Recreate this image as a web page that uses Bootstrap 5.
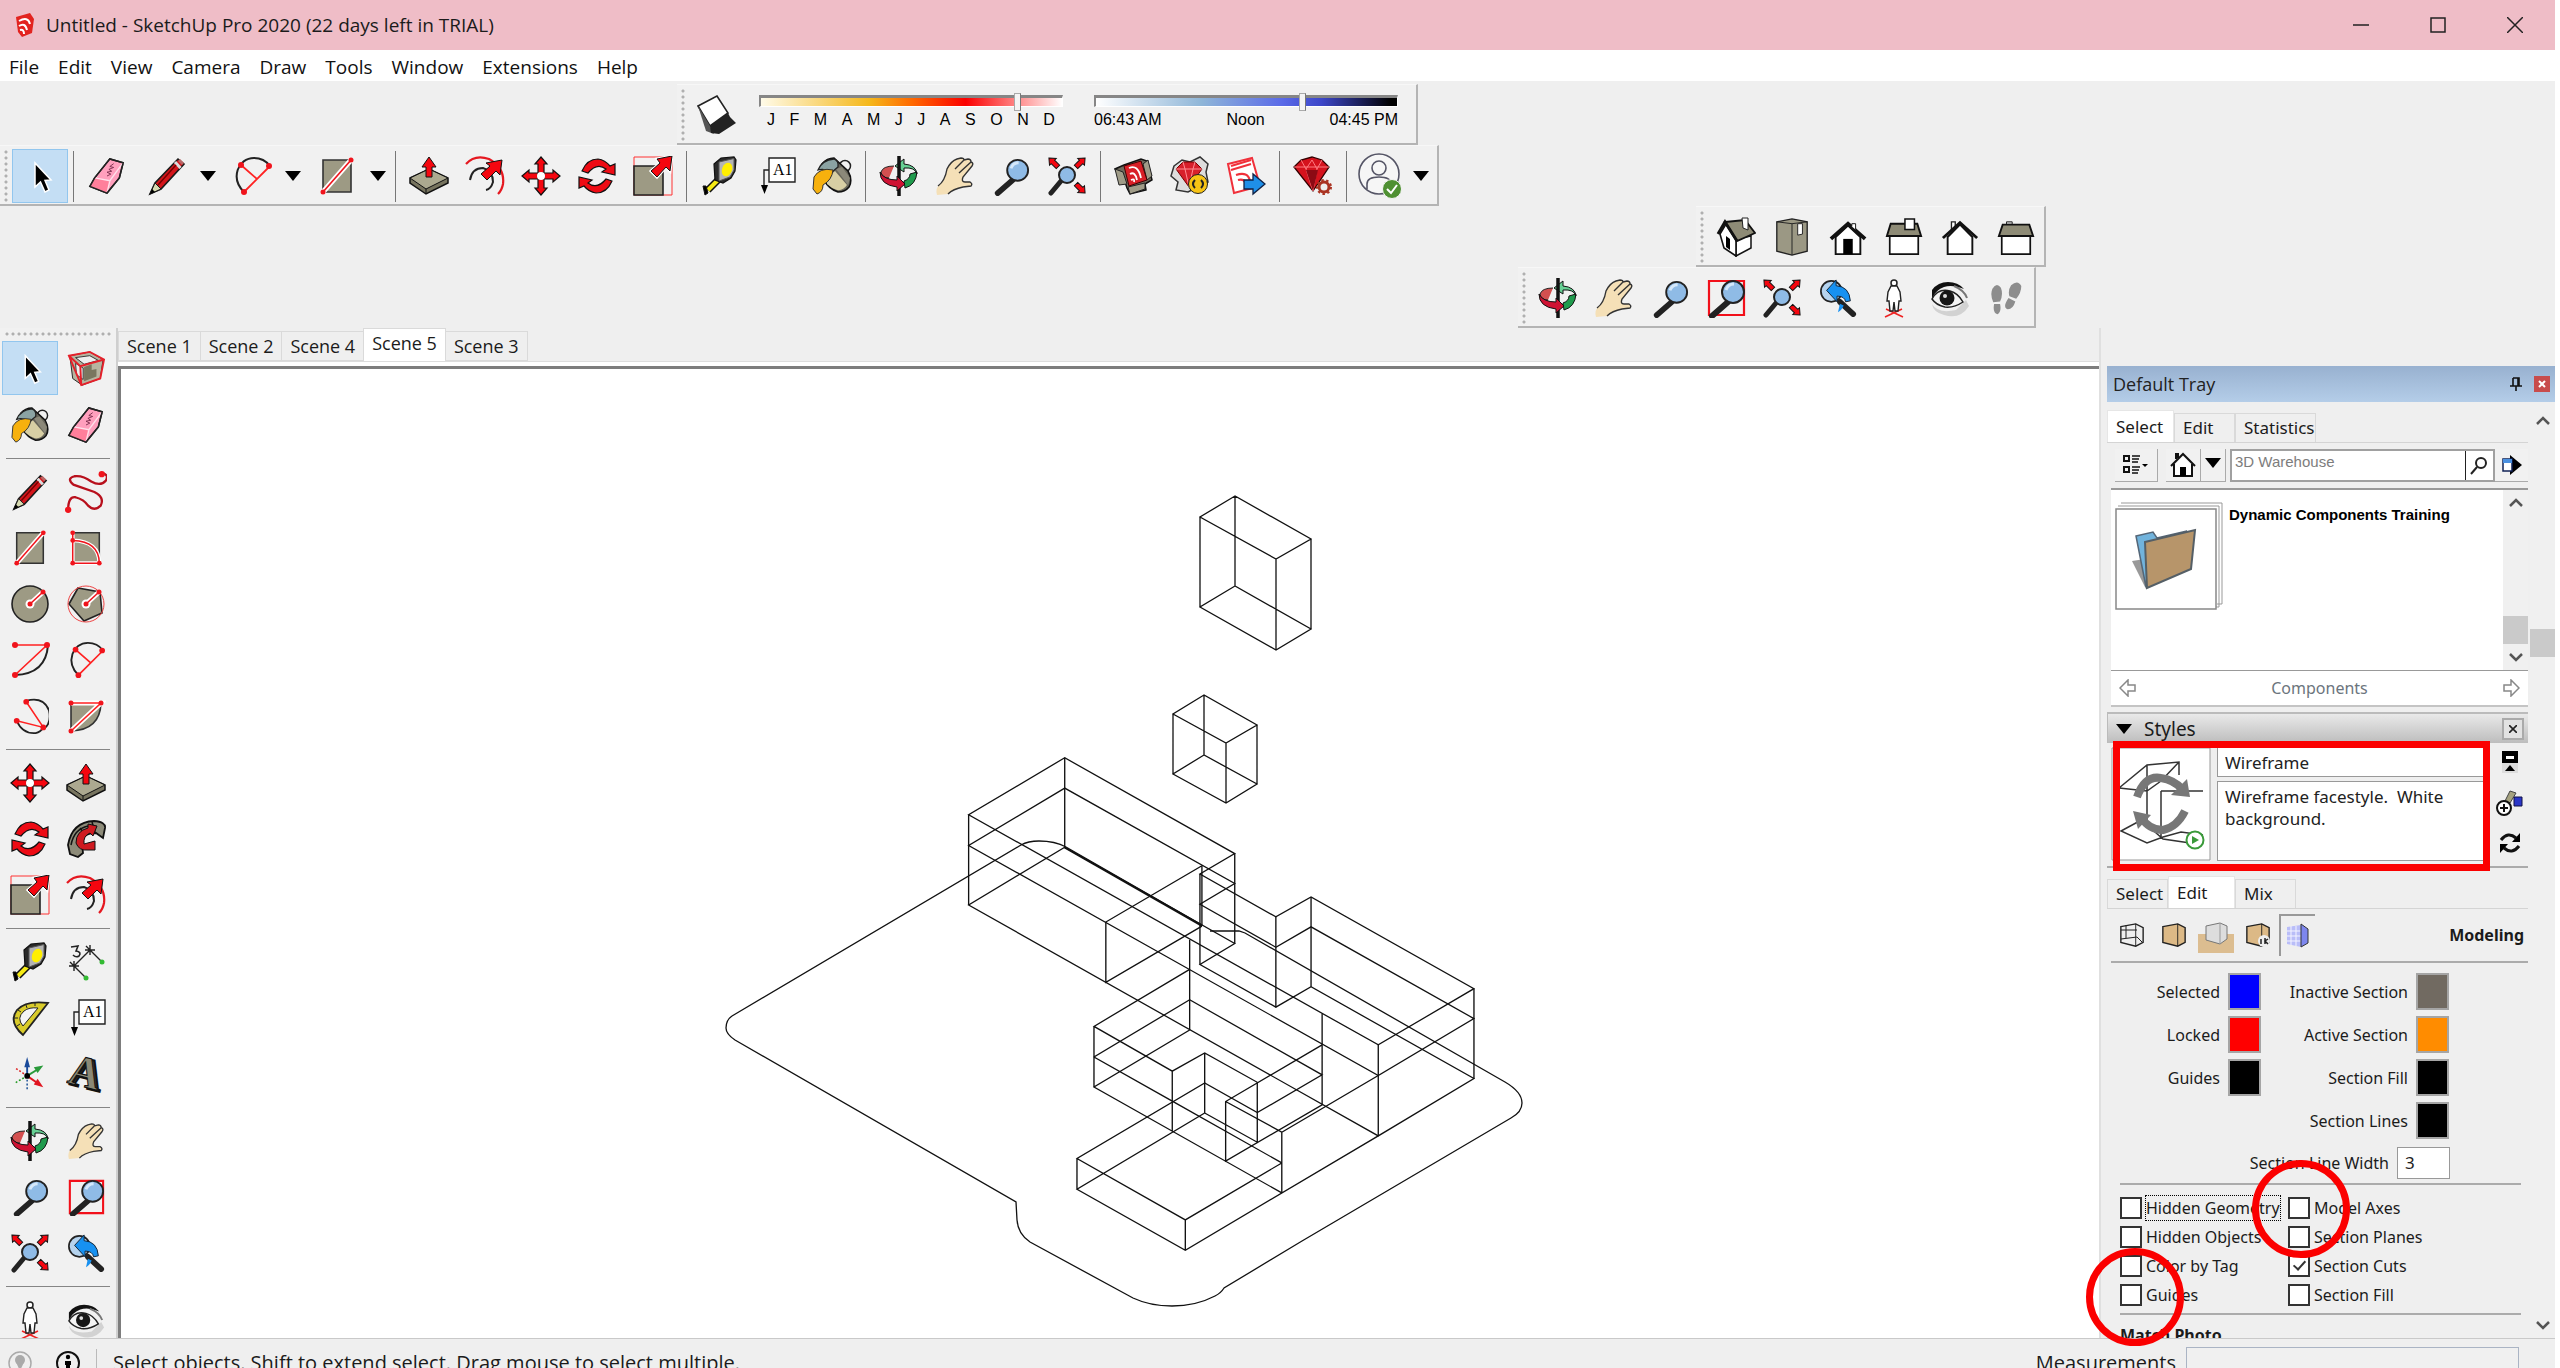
<!DOCTYPE html>
<html lang="en">
<head>
<meta charset="utf-8">
<meta name="viewport" content="width=device-width, initial-scale=1">
<title>Untitled - SketchUp Pro 2020</title>
<link href="https://cdn.jsdelivr.net/npm/bootstrap@5.3.0/dist/css/bootstrap.min.css" rel="stylesheet">
<style>
:root{--face:#efefef;--bar:#f1f1f1;--edge:#b4b4b4;--ui:"Open Sans","Noto Sans",sans-serif;--tray:"Noto Sans","Open Sans",sans-serif;--red:#fb0000}
body{font-family:var(--ui);font-size:18px;line-height:24px;color:#1b1b1b;background:#fff;height:100vh;overflow:hidden;padding-right:5px}
button{font:inherit;color:inherit;background:none;border:0;padding:0}
svg{display:block;flex:none}
.titlebar{height:50px;background:#efbdc7;font-size:19px;padding-right:2px}
.winbtn{width:77px;height:50px;display:flex;align-items:center;justify-content:center}
.menubar{height:31px;background:#fff;font-size:19px;padding:2px 0 0 9px;gap:19px}
.menubar a{color:#111;text-decoration:none}
.dock{background:var(--face);height:247px;padding-top:3px}
.toolstrip{height:61px;padding-top:2px;background:var(--bar);border-right:2px solid var(--edge);border-bottom:2px solid var(--edge);border-top:1px solid #f7f7f7;width:max-content}
.at-shadow{margin-left:677px;padding-right:18px}.at-views{margin-left:1696px}.at-camera{margin-left:1518px}
.grip{width:12px;height:54px;flex:none;background:radial-gradient(circle,#b0b0b0 1px,transparent 2px) 4px 0/4px 6px repeat-y}
.grip-h{height:13px;background:radial-gradient(circle,#b0b0b0 1px,transparent 2px) 0 4px/6px 4px repeat-x;margin:0 4px}
.tool{width:56px;height:56px;display:flex;align-items:center;justify-content:center;flex:none}
.tool.picked{background:#c4def4;border:1px solid #92c6ee;height:54px}
.sep{width:11px;height:51px;flex:none;background:linear-gradient(#777,#777) center/1px 100% no-repeat}
.drop{width:25px;height:50px;display:flex;align-items:center;justify-content:center}
.drop::after,.tri{content:"";border:8px solid transparent;border-top:10px solid #000;border-bottom:0}
.daysl{width:304px;flex:none;margin-left:6px;padding-bottom:8px;font-family:"Liberation Sans",Arial,sans-serif;font-size:16px;line-height:20px;color:#000}
.daysl + .daysl{margin-left:31px}
.daysl input{appearance:none;width:100%;height:18px;display:block;margin:0;background:transparent}
.daysl input::-webkit-slider-runnable-track{height:12px;border-top:3px solid #868686;border-left:2px solid #868686;border-bottom:1px solid #fff;border-right:1px solid #fff}
.daysl input::-webkit-slider-thumb{appearance:none;width:7px;height:18px;background:#f4f4f4;border:1px solid #aaa;border-right-color:#777;margin-top:-5px}
#month::-webkit-slider-runnable-track{background:linear-gradient(90deg,#fffbe9,#f5b81b 36%,#ff6a00 50%,#fb0000 68%,#f88 85%,#fff)}
#hour::-webkit-slider-runnable-track{background:linear-gradient(90deg,#fff,#8fb6d8 35%,#5a6ae8 62%,#3c46c8 75%,#000 98%)}
.sidebar{width:118px;background:var(--bar);border-right:2px solid #cfcfcf;flex:none;overflow:hidden}
.toolgrid{padding:0 2px}
.rule-h{height:11px;padding:5px 6px}
.rule-h::before{content:"";display:block;height:1px;background:#858585}
.scenes{background:var(--face);height:34px;padding-top:1px;border-bottom:1px solid #ddd}
.scene{border:1px solid #dadada;height:30px;padding:0 8px;line-height:28px;margin-right:-1px;flex:none}
.scene.on{background:#fff;height:33px;padding:0 8px 4px;border-bottom:0}
.canvas3d{background:#fff;border-top:3px solid #7d7d7d;border-left:3px solid #7d7d7d;margin-top:4px;min-height:0}
.trayside{width:456px;flex:none;background:var(--face);font-family:var(--tray);font-size:16px;border-left:2px solid #e0e0e0;padding-left:6px}
.tray-title{height:36px;background:linear-gradient(#98b1d0,#b4cde8);padding:0 5px 0 6px;margin-top:38px;font-family:var(--ui);font-size:18px;color:#222}
.tray-x{width:16px;height:16px;background:#c84c4c;display:flex;align-items:center;justify-content:center}
.minitabs{border-bottom:1px solid #d4d4d4;height:33px;font-size:17px}
.minitab{border:1px solid #d9d9d9;border-bottom:0;height:29px;line-height:28px;padding:0 8px;text-align:left}
.minitab.on{background:#fff;height:32px;border-color:#e6e6e6}
.w60{width:61px}.w67{width:67px}.w81{width:81px}
.sb{width:25px;background:#f0f0f0;flex:none}
.sb i{display:block;background:#cacaca;height:28px}
.toolrow{padding:6px 0 6px 8px}
.flatbtn{height:33px;display:flex;align-items:center;justify-content:center;border-right:1px solid #aaa;border-bottom:1px solid #aaa;background:#f1f1f1}
.search{height:33px;border:2px solid #a0a0a0;background:#fff;width:265px}
.search input{border:0;outline:0;width:234px;height:29px;padding:0 3px 8px;font-family:"Liberation Sans",Arial,sans-serif;font-size:15px;border-right:1px solid #222}
.search input::placeholder{color:#7d7d7d}
.comps{height:183px;background:#fff;border-top:2px solid #999;border-bottom:1px solid #999}
.compname{font:bold 15px/24px "Liberation Sans",Arial,sans-serif;color:#000;padding:13px 0 0 6px}
.compnav{height:36px;border-bottom:2px solid #c4c4c4;margin-bottom:5px}
.stylehead{height:31px;background:linear-gradient(#e9e9e9,#bdbdbd);border-top:2px solid #bbb;border-left:1px solid #bbb;font-size:19px}
.xbtn{width:22px;height:22px;border:2px solid #aaa;background:#e2e2e2;display:flex;align-items:center;justify-content:center}
.styleinfo{height:123px;padding-top:4px;gap:6px}
.fld{border:1px solid #999;background:#fff;width:268px;padding:0 7px;font-size:17px;line-height:22px;color:#222;display:block;resize:none;overflow:hidden;border-radius:0;outline:0}
.namefld{height:30px}.descfld{height:80px;padding-top:4px}
.styletabs{height:41px}
.modelrow{height:52px}
.mi{width:42px;height:42px;display:flex;align-items:center;justify-content:center}
.mi-on{width:36px;border-left:2px solid #999;border-top:2px solid #999}
.colors{padding-top:7px}
.swatch{width:33px;height:37px;border:2px solid #a5a5a5;display:block;flex:none}
.colorrow{height:43px}
.lab1{width:113px;text-align:right}.lab2{width:147px;text-align:right}
.lw{height:41px;padding-right:78px}
.lwfld{width:53px;height:32px}
.chk{appearance:none;width:22px;height:22px;border:2px solid #333;background:#fff;margin:0 4px 0 0;flex:none}
.chk:checked{position:relative}
.chk:checked::after{content:"";position:absolute;left:6px;top:1px;width:7px;height:12px;border:solid #333;border-width:0 2px 2px 0;transform:rotate(42deg)}
.chkline{height:29px}
.chkcol{width:168px}
.dotted{outline:1px dotted #000}
.line{height:2px;background:#ababab}
.inset{margin-left:13px;margin-right:7px}
.outer{padding:14px 0 8px;margin-left:2px}
.outer i{margin-top:203px}
.ring{position:absolute;width:98px;height:98px;border:7px solid var(--red);border-radius:50%;pointer-events:none;z-index:5}
.ring-a{right:371px;bottom:-8px}
.ring-b{right:205px;bottom:80px}
.redbox{position:absolute;left:6px;top:-2px;width:377px;height:130px;border:7px solid var(--red);pointer-events:none;z-index:4}
.statusbar{height:30px;background:var(--face);border-top:1px solid #c9c9c9;overflow:hidden;flex:none;font-size:20px;line-height:28px;padding-top:10px}
.statusbar svg{margin-top:2px}
.meas{width:333px;height:34px;border:1px solid #aab4c4;background:#f0f0f0;margin:-2px 36px 0 10px}
</style>
<script src="https://cdn.jsdelivr.net/npm/bootstrap@5.3.0/dist/js/bootstrap.bundle.min.js"></script>
</head>
<body class="d-flex flex-column">

<svg width="0" height="0" class="position-absolute" aria-hidden="true">
<defs>
<path id="arr" d="M0-9L6-2H3V7H-3V-2H-6Z" fill="#f5060f" stroke="#111" stroke-width="1.2"/>
<g id="lens"><path d="M22 24L6 38" stroke="#222" stroke-width="6" stroke-linecap="round"/><circle cx="27" cy="14" r="11" fill="#8fbbe6" stroke="#222" stroke-width="2"/><path d="M20 12q2-6 8-6" stroke="#d5e8fa" stroke-width="3" fill="none"/></g>
<symbol id="i-select" viewBox="0 0 40 40"><path d="M15 7V31L20.500 26L25 36L29 34L25 24.500L31 24Z" fill="#000" stroke="#fff" stroke-width="1.500"/></symbol>
<symbol id="i-eraser" viewBox="0 0 40 40"><path d="M7 22L23 2L37 6L33 22L20 38L2 31Z" fill="#ff9fbd" stroke="#222" stroke-width="1.600"/><path d="M7 22L23 25L20 38L2 31Z" fill="#ff7f9b"/><path d="M7 22L23 25L37 6M23 25L20 38" stroke="#ffe0ea" stroke-width="1.400" fill="none"/><path d="M27 7l-4 3 4 1-5 2 3 2-5 1 4 2-4 2" stroke="#803050" fill="none"/><path d="M7 22L23 2L37 6L33 22L20 38L2 31Z" fill="none" stroke="#222" stroke-width="1.600"/></symbol>
<symbol id="i-pencil" viewBox="0 0 40 40"><path d="M31 3L37 8L14 33L3 38L8 27Z" fill="#d4151b" stroke="#1a1a1a" stroke-width="1.600"/><path d="M8 27L14 33L3 38Z" fill="#d7dab0" stroke="#1a1a1a"/><path d="M3 38l2-5 3 3z"/><path d="M28 6l5.500 6" stroke="#ddd" stroke-width="3"/><path d="M32 4l4 4" stroke="#b66" stroke-width="3"/><path d="M11 29L29 9" stroke="#700" stroke-width="1.500"/></symbol>
<symbol id="i-arc2" viewBox="0 0 40 40"><path d="M12 36C-2 22 6 2 22 2 30 2 35 6 38 10" fill="none" stroke="#222" stroke-width="2"/><path d="M12 36L38 10M9 9L25 23" stroke="#f22" stroke-width="1.800"/><g fill="#f0141c"><circle cx="12" cy="36" r="3"/><circle cx="37" cy="10" r="3"/><circle cx="9" cy="9" r="3"/></g></symbol>
<symbol id="i-rect" viewBox="0 0 40 40"><path d="M6 4H34V36H6Z" fill="#9d9a84" stroke="#333" stroke-width="1.600"/><path d="M6 36L34 4" stroke="#fff" stroke-width="5"/><path d="M6 36L34 4" stroke="#f0141c" stroke-width="1.600"/><circle cx="6" cy="36" r="2.500" fill="#f0141c"/><circle cx="34" cy="4" r="2.500" fill="#f0141c"/></symbol>
<symbol id="i-push" viewBox="0 0 40 40"><path d="M1 22L20 13L39 22V27L17 38L1 27Z" fill="#77745f" stroke="#111" stroke-width="1.500"/><path d="M1 22L20 13L39 22L17 33Z" fill="#aca990" stroke="#111"/><path d="M17 33v5" stroke="#111"/><path d="M20 1L27 11H23V21H17V11H13Z" fill="#f5060f" stroke="#111"/></symbol>
<symbol id="i-offset" viewBox="0 0 40 40"><path d="M1 8Q10-2 24 3Q40 12 38 28Q37 34 33 38" fill="none" stroke="#e51820" stroke-width="2.200"/><path d="M5 24Q7 12 18 12Q28 15 28 26Q26 33 21 34" fill="none" stroke="#222" stroke-width="2"/><path d="M37 4L35 19L31 15L22 24L16 18L25 10L21 7Z" fill="#f5060f" stroke="#111"/></symbol>
<symbol id="i-move" viewBox="0 0 40 40"><use href="#arr" x="20" y="10"/><use href="#arr" transform="translate(30 20) rotate(90)"/><use href="#arr" transform="translate(20 30) rotate(180)"/><use href="#arr" transform="translate(10 20) rotate(270)"/><circle cx="20" cy="20" r="4" fill="#fff"/></symbol>
<symbol id="i-rotate" viewBox="0 0 40 40"><path id="rot" d="M5 15Q10 3 21 3Q28 4 33 10L38 8V19L25 16L29 13Q20 6 11 17Z" fill="#ee0b14" stroke="#111" stroke-width="1.200"/><use href="#rot" transform="rotate(180 20 20)"/></symbol>
<symbol id="i-scale" viewBox="0 0 40 40"><path d="M1 1H39V39H1Z" fill="none" stroke="#f33"/><path d="M1 10H30V39H1Z" fill="#9d9a84" stroke="#222" stroke-width="1.600"/><path d="M39 0L37 15L33 11L24 21L18 15L27 7L24 3Z" fill="#f5060f" stroke="#fff" stroke-width="3"/><path d="M39 0L37 15L33 11L24 21L18 15L27 7L24 3Z" fill="#f5060f" stroke="#111"/></symbol>
<symbol id="i-tape" viewBox="0 0 40 40"><path d="M21 21L8 34" stroke="#111" stroke-width="7"/><path d="M21 21L8 34" stroke="#f5ea14" stroke-width="4"/><path d="M3 30l3 0 2 7-3 2z" stroke="#111"/><path d="M14 8L21 2L34 1L36 4L35 15L31 22L23 27L15 24Z" fill="#2a2a2a" stroke="#111" stroke-width="1.200"/><path d="M19 6L34 2.500L34 14L30 21L19 25Z" fill="#b4b4b4" stroke="#555"/><ellipse cx="27" cy="13.500" rx="5" ry="7" fill="#ffef00" transform="rotate(22 27 13.500)"/></symbol>
<symbol id="i-text" viewBox="0 0 40 40"><path d="M13 2H39V26H13Z" fill="#fff" stroke="#222" stroke-width="1.400"/><path d="M13 14H8V32" fill="none" stroke="#222" stroke-width="1.400"/><path d="M5 29h7L8.500 38z"/><text x="17" y="19" font-family="Liberation Serif" font-size="16">A1</text></symbol>
<symbol id="i-paint" viewBox="0 0 40 40"><circle cx="33" cy="10" r="5.500" fill="none" stroke="#222" stroke-width="1.500"/><path d="M10 8Q15 2 22 2L36 15Q41 24 37 31Q33 36 26 36Q17 33 12 24Z" fill="#67655a" stroke="#111" stroke-width="1.600"/><path d="M15 22L23 15L35 29Q31 35 25 34Q19 32 15 28Z" fill="#d8cfa4"/><path d="M24 13L30 11L38 22L36 29Z" fill="#8b8879"/><path d="M6 14Q10 4 22 3Q27 5 26 11L20 16Q12 12 6 14Z" fill="#8ba3a3" stroke="#222" stroke-width="1.300"/><path d="M21 14Q8 11 2 21L1 33L5 38Q11 36 11 29Q20 24 21 14Z" fill="#f7b10d" stroke="#333"/></symbol>
<symbol id="i-orbit" viewBox="0 0 40 40"><path d="M15 10Q4 10 2 16Q3 22 10 22" fill="#d35050" stroke="#222"/><path d="M38 16Q37 29 26 32L25 25Q31 23 31 18Z" fill="#209b4d" stroke="#111"/><path d="M38 18Q36 11 25 12V16L16 10L25 3V8Q37 9 38 18Z" fill="#67d094" stroke="#111"/><path d="M20 0V40" stroke="#111" stroke-width="3.500"/><path d="M1 16Q5 24 18 24V20L26 28L18 35V31Q1 29 1 16Z" fill="#cf1233" stroke="#111"/></symbol>
<symbol id="i-hand" viewBox="0 0 40 40"><path d="M2 39Q0 32 5 28Q10 25 12 13Q16 5 22 3L26 2Q29 2 29 4L33 3Q36 3 36 6Q39 7 37 10L28 21Q26 26 30 26L35 26Q38 28 36 30L28 31Q18 33 13 38Z" fill="#f5e0b7"/><path d="M3 30Q10 25 12 13Q16 5 22 3L26 2Q29 2 29 4L33 3Q36 3 36 6Q39 7 37 10L28 21Q26 26 30 26L35 26Q38 28 36 30L28 31Q18 33 13 38M29 4L20 13M36 6L24 17" fill="none" stroke="#333" stroke-width="1.400"/></symbol>
<symbol id="i-zoom" viewBox="0 0 40 40"><use href="#lens"/></symbol>
<symbol id="i-zoomwin" viewBox="0 0 40 40"><path d="M3 3H38V37H3Z" fill="none" stroke="#f2101a" stroke-width="2.200"/><use href="#lens"/></symbol>
<symbol id="i-extents" viewBox="0 0 40 40"><path d="M14 25L4 37" stroke="#222" stroke-width="5" stroke-linecap="round"/><circle cx="20" cy="19" r="8" fill="#8fbbe6" stroke="#222" stroke-width="2"/><use href="#arr" transform="translate(7 7) rotate(-45) scale(.8)"/><use href="#arr" transform="translate(33 7) rotate(45) scale(.8)"/><use href="#arr" transform="translate(33 32) rotate(135) scale(.8)"/></symbol>
<symbol id="i-prev" viewBox="0 0 40 40"><circle cx="13" cy="13" r="11" fill="#b5d3ee" stroke="#222" stroke-width="1.800"/><path d="M22 24L36 37" stroke="#222" stroke-width="6" stroke-linecap="round"/><path d="M8 12L18 1V7Q32 8 33 23L28 24Q27 18 19 18V24Z" fill="#1791f1" stroke="#123"/><path d="M20 35q4-2 6-7l-4-2z" fill="#1791f1"/></symbol>
<symbol id="i-person" viewBox="0 0 40 40"><path d="M11 39L28 31M12 31L29 39" stroke="#e22" stroke-width="1.600"/><circle cx="20" cy="5" r="3" fill="#fff" stroke="#222" stroke-width="1.500"/><path d="M17 8H23L26 14L27 23H25L24 33H21L20 24L19 33H16L15 23H13L14 14Z" fill="#fff" stroke="#222" stroke-width="1.400"/></symbol>
<symbol id="i-eye" viewBox="0 0 40 40"><path d="M2 26Q8 36 26 32L36 22L39 28Q30 42 14 37Q3 34 2 26Z" fill="#c4c4c4" opacity=".7"/><path d="M2 21Q8 10 20 13Q28 15 33 24Q24 30 15 29Q6 27 2 21Z" fill="#f4f4f4" stroke="#222" stroke-width="1.500"/><circle cx="17" cy="20" r="7.500" fill="#161616"/><circle cx="15" cy="18" r="2" fill="#ddd"/><path d="M2 12Q8 4 18 4Q28 4 34 11Q22 6 14 9Q6 12 2 20Z" fill="#111"/><path d="M24 8Q34 12 37 20" stroke="#777" stroke-width="2" fill="none"/></symbol>
<symbol id="i-walk" viewBox="0 0 40 40"><path d="M4 9Q9 1 14 8Q17 16 13 24L5 25Q1 16 4 9ZM6 27H13Q15 36 10 39Q4 38 6 27ZM26 5Q34-2 38 6Q38 14 32 21L24 18Q22 11 26 5ZM23 20L31 24Q28 34 21 33Q16 30 23 20Z" fill="#8d8d8d"/></symbol>
<symbol id="i-component" viewBox="0 0 40 40"><path d="M3 6L24 2L38 10L35 30L16 37L6 30Z" fill="#b7b4a0" stroke="#222"/><path d="M9 8L24 6L33 11L18 15ZM9 14l8 5v12l-7-5z" fill="#eee" stroke="#333"/><path d="M18 18l8-3v6l5-1v8l-13 5z" fill="#79765f"/><path d="M2 6L24 2L39 10L35 30L15 37ZM2 6L14 17L39 10M14 17L15 37" fill="none" stroke="#e5202a" stroke-width="2"/></symbol>
<symbol id="i-freehand" viewBox="0 0 40 40"><path d="M3 37Q3 24 10 25Q18 27 22 33Q28 39 34 33Q38 25 28 20L8 13Q1 7 9 5Q17 4 25 10Q34 15 39 9Q42 3 35 2" fill="none" stroke="#b8101c" stroke-width="2.200"/><circle cx="3" cy="37" r="3" fill="#f0141c"/><circle cx="35" cy="3" r="3" fill="#f0141c"/></symbol>
<symbol id="i-rrect" viewBox="0 0 40 40"><path d="M6 4H34V36H6Z" fill="#9d9a84" stroke="#333" stroke-width="1.600"/><path d="M6 3V36H34Q34 13 6 12" fill="none" stroke="#fff" stroke-width="4"/><path d="M6 3V36H34Q34 13 6 12" fill="none" stroke="#f0141c" stroke-width="1.600"/><g fill="#f0141c"><circle cx="6" cy="4" r="2.500"/><circle cx="6" cy="12" r="2.500"/><circle cx="6" cy="36" r="2.500"/><circle cx="34" cy="36" r="2.500"/></g></symbol>
<symbol id="i-circle" viewBox="0 0 40 40"><circle cx="20" cy="20" r="18" fill="#9d9a84" stroke="#222" stroke-width="1.600"/><path d="M20 20L33 8" stroke="#fff" stroke-width="5"/><circle cx="20" cy="20" r="4.500" fill="#fff"/><path d="M20 20L33 8" stroke="#f0141c" stroke-width="1.600"/><circle cx="20" cy="20" r="2.500" fill="#f0141c"/><circle cx="33" cy="8" r="2.500" fill="#f0141c"/></symbol>
<symbol id="i-polygon" viewBox="0 0 40 40"><path d="M12 4L34 8L36 29L18 37L3 20Z" fill="#9d9a84" stroke="#222" stroke-width="1.600"/><circle cx="20" cy="20" r="18" fill="none" stroke="#e44"/><path d="M20 20L33 8" stroke="#fff" stroke-width="5"/><circle cx="20" cy="20" r="4.500" fill="#fff"/><path d="M20 20L33 8" stroke="#f0141c" stroke-width="1.600"/><circle cx="20" cy="20" r="2.500" fill="#f0141c"/><circle cx="33" cy="8" r="2.500" fill="#f0141c"/></symbol>
<symbol id="i-arc" viewBox="0 0 40 40"><path d="M5 35Q36 34 38 5" fill="none" stroke="#222" stroke-width="2"/><path d="M5 5H37L5 35" fill="none" stroke="#f22" stroke-width="1.600"/><g fill="#f0141c"><circle cx="5" cy="5" r="3"/><circle cx="37" cy="5" r="3"/><circle cx="5" cy="35" r="3"/></g></symbol>
<symbol id="i-arc3" viewBox="0 0 40 40"><path d="M16 4Q34-1 40 14Q43 28 34 34M6 25Q12 39 26 38Q31 37 34 32" fill="none" stroke="#222" stroke-width="2"/><path d="M16 5L34 32L6 25" fill="none" stroke="#f22" stroke-width="1.600"/><g fill="#f0141c"><circle cx="16" cy="5" r="3"/><circle cx="34" cy="32" r="3"/><circle cx="6" cy="25" r="3"/></g></symbol>
<symbol id="i-pie" viewBox="0 0 40 40"><path d="M5 7H35Q34 34 5 35Z" fill="#9d9a84" stroke="#333" stroke-width="1.600"/><path d="M5 7H35L5 35" fill="none" stroke="#fff" stroke-width="5"/><path d="M5 7H35L5 35" fill="none" stroke="#f22" stroke-width="1.600"/><g fill="#f0141c"><circle cx="5" cy="7" r="2.500"/><circle cx="35" cy="7" r="2.500"/><circle cx="5" cy="35" r="2.500"/></g></symbol>
<symbol id="i-follow" viewBox="0 0 40 40"><path d="M2 26Q6 3 28 2Q40 3 39 9L37 19L30 14Q16 14 16 24L17 34L12 38L4 35Z" fill="#8d8b79" stroke="#111" stroke-width="1.800"/><path d="M5 26Q8 10 22 7M14 9l6 8M26 3l3 10" fill="none" stroke="#111" stroke-width="1.500"/><path d="M10 24Q10 12 22 9L22 5L31 7L27 17L24 14Q17 17 18 25L29 22V31L22 31Q13 32 10 24Z" fill="#cf1a20" stroke="#111"/></symbol>
<symbol id="i-dim" viewBox="0 0 40 40"><path d="M8 24L24 8M8 24L20 36M24 8L36 20M4 20l8 8M20 4l8 8M8 19v10M24 3v10M3 24h10M19 8h10" stroke="#222" stroke-width="1.400"/><circle cx="20" cy="36" r="2.500" fill="#3b3"/><circle cx="36" cy="20" r="2.500" fill="#3b3"/><path d="M5 5l7-1-2 5q6 1 3 5-3 2-6-1" fill="none" stroke="#222" stroke-width="1.600"/></symbol>
<symbol id="i-protractor" viewBox="0 0 40 40"><path d="M13 37Q-2 24 7 12Q16 2 38 5Z" fill="#d9cb2a" stroke="#222" stroke-width="1.800"/><path d="M13 28Q6 20 14 13Q19 9 28 10Z" fill="#f4f4f4" stroke="#222"/><path d="M7 28l3-2M4 20l4 0M8 12l3 2M16 7l1 3M25 5v3" stroke="#222"/></symbol>
<symbol id="i-axes" viewBox="0 0 40 40"><path d="M17 22L5 14" stroke="#d22" stroke-width="1.600" stroke-dasharray="2 2"/><path d="M17 22L5 29" stroke="#292" stroke-width="1.600" stroke-dasharray="2 2"/><path d="M17 22V37" stroke="#259" stroke-width="1.600" stroke-dasharray="2 2"/><path d="M17 22V8" stroke="#1a4a9a" stroke-width="2"/><path d="M14 13l3-11 3 11z" fill="#1a4a9a"/><path d="M17 22L30 14" stroke="#2a9a3a" stroke-width="2"/><path d="M34 11l-10 2 4 6z" fill="#2a9a3a"/><path d="M17 22L30 31" stroke="#e01520" stroke-width="2"/><path d="M34 34l-10-3 4-6z" fill="#e01520"/><circle cx="17" cy="22" r="3"/></symbol>
<symbol id="i-text3d" viewBox="0 0 40 40"><g font-family="Liberation Serif" font-weight="bold" font-size="44" transform="rotate(14 20 20)"><text x="6" y="34" fill="#333" stroke="#111" stroke-width="2">A</text><text x="3" y="33" fill="#8b8976" stroke="#111">A</text></g></symbol>
<symbol id="i-wh" viewBox="0 0 40 40"><path d="M10 9L1 13L4 18L9 20L13 32L16 38L32 34L31 28L38 24L33 5L27 3Z" fill="#6e6a5c" stroke="#111" stroke-width="1.500"/><path d="M1 13L9 16L13 28L5 29ZM29 8L34 4L38 20L33 24ZM14 31L31 27L31 33L16 38Z" fill="#a09c88" stroke="#222"/><path d="M10 10L27 5L33 24L15 30Z" fill="#d92027" stroke="#400"/><path d="M15 12Q24 8 27 22M16 18Q21 15 23 24M17 24q4-2 3 2" fill="none" stroke="#fff" stroke-width="1.800"/></symbol>
<symbol id="i-ext" viewBox="0 0 40 40"><path d="M4 10L12 4L20 6L30 1L38 8L36 16L38 26L18 36L6 34L8 26L1 20Z" fill="#ddd" stroke="#333" stroke-width="1.500"/><path d="M6 13L13 6H25L32 13L19 31Z" fill="#d8202b" stroke="#700"/><path d="M6 13H32M13 6l2 7 4 18M25 6l-2 7-4 18" stroke="#ff8d94" fill="none"/><circle cx="28" cy="28" r="9.500" fill="#f7c314" stroke="#222"/><path d="M25 32q-4-4 0-8M31 24q4 4 0 8" fill="none" stroke="#222" stroke-width="2"/></symbol>
<symbol id="i-layout" viewBox="0 0 40 40"><path d="M2 8L26 2L34 30L8 37Z" fill="#fff" stroke="#f0303a" stroke-width="2"/><path d="M5 14l20-6M5 10l20-6M10 19q12-4 14 6M12 24q7-2 8 5" fill="none" stroke="#f0303a" stroke-width="2.200"/><path d="M18 24H27V18L39 28L27 38V33H18Z" fill="#1f8fe8" stroke="#124" stroke-width="1.300"/></symbol>
<symbol id="i-ruby" viewBox="0 0 40 40"><path d="M1 11L8 4L19 1L29 4L36 11L20 35Z" fill="#d5121d" stroke="#300" stroke-width="1.300"/><path d="M1 11H36M8 4l5 9 7 22M29 4l-5 9-4 22M13 13l6-9 5 9" stroke="#ff7a80" fill="none"/><path d="M20 14L13 14 20 35 25 14Z" fill="#8c0a14"/><circle cx="31" cy="31" r="5" fill="#eee" stroke="#a32" stroke-width="3"/><circle cx="31" cy="31" r="7" fill="none" stroke="#a32" stroke-width="2" stroke-dasharray="2.500 2.500"/></symbol>
<symbol id="i-user" viewBox="0 0 46 46"><circle cx="22" cy="21" r="20" fill="#f6f6f6" stroke="#556" stroke-width="1.600"/><circle cx="22" cy="15" r="7" fill="none" stroke="#556" stroke-width="1.600"/><path d="M10 36V31Q10 24 22 24Q34 24 34 31" fill="none" stroke="#556" stroke-width="1.600"/><circle cx="35" cy="36" r="9.500" fill="#4f9032" stroke="#f4f4f4"/><path d="M30 36l4 4 6-8" fill="none" stroke="#fff" stroke-width="2"/></symbol>
<symbol id="i-iso" viewBox="0 0 40 40"><path d="M20 22V39L35 31V19Z" fill="#fff" stroke="#111" stroke-width="1.500"/><path d="M4 17L10 7L20 23V39L8 31Z" fill="#fff" stroke="#111" stroke-width="1.600"/><path d="M10 19l4 3v11l-4-3z"/><path d="M9 5L29 3L39 16L21 24Z" fill="#8e8b76" stroke="#111" stroke-width="1.800"/><path d="M2 17L9 5L21 24" fill="none" stroke="#111" stroke-width="3"/><path d="M26 1H32V13L27 11Z" fill="#fff" stroke="#222"/></symbol>
<symbol id="i-top" viewBox="0 0 40 40"><path d="M4 4L20 1L36 4V35L20 39L4 35Z" fill="#9b9884" stroke="#222" stroke-width="1.400"/><path d="M20 6V39M4 4L20 6L36 4" fill="none" stroke="#222"/><path d="M26 6h5V17l-5 1z" fill="#fff" stroke="#222"/></symbol>
<symbol id="i-front" viewBox="0 0 40 40"><path d="M7 20L20 8L33 20V38H7Z" fill="#fff" stroke="#111" stroke-width="2"/><path d="M2 22L20 6L38 22" fill="none" stroke="#111" stroke-width="4"/><path d="M15 22H25V38H15Z"/><path d="M24 9V6h4v6" fill="#fff" stroke="#111"/></symbol>
<symbol id="i-right" viewBox="0 0 40 40"><path d="M5 19H35V38H5Z" fill="#fff" stroke="#111" stroke-width="1.800"/><path d="M2 19L6 6H34L38 19Z" fill="#8e8b76" stroke="#111" stroke-width="2"/><path d="M21 1H31V12H21Z" fill="#fff" stroke="#111" stroke-width="1.600"/></symbol>
<symbol id="i-back" viewBox="0 0 40 40"><path d="M11 14V4h4v7" fill="#fff" stroke="#222" stroke-width="1.400"/><path d="M7 20L20 7L33 20V38H7Z" fill="#fff" stroke="#111" stroke-width="2"/><path d="M2 21L20 5L38 21" fill="none" stroke="#111" stroke-width="3"/></symbol>
<symbol id="i-left" viewBox="0 0 40 40"><path d="M5 19H35V38H5Z" fill="#fff" stroke="#111" stroke-width="1.800"/><path d="M10 7V4h6v3" fill="#ccc" stroke="#222"/><path d="M2 19L6 7H34L38 19Z" fill="#8e8b76" stroke="#111" stroke-width="2"/></symbol>
<symbol id="i-up" viewBox="0 0 14 10"><path d="M1 8L7 2L13 8" fill="none" stroke="#555" stroke-width="2.500"/></symbol>
<symbol id="i-down" viewBox="0 0 14 10"><path d="M1 2L7 8L13 2" fill="none" stroke="#555" stroke-width="2.500"/></symbol>
<symbol id="i-cube" viewBox="0 0 28 28"><path d="M2 5L18 2L26 6V22L18 26L2 22Z" stroke="#222" stroke-width="1.500"/><path d="M18 2V26" stroke="#222"/></symbol>
</defs>
</svg>

<header class="titlebar d-flex align-items-center flex-shrink-0">
  <svg width="18" height="24" viewBox="0 0 18 24" class="ms-3"><path d="M0 4L14 0L18 6L16 20L6 24L2 19Z" fill="#e2231f"/><path d="M3 8Q12 3 14 11M3 13Q9 9 11 17M4 17q4-1 4 4" fill="none" stroke="#fff" stroke-width="2"/></svg>
  <span class="ms-2 ps-1 flex-grow-1">Untitled - SketchUp Pro 2020 (22 days left in TRIAL)</span>
  <button class="winbtn" aria-label="Minimize"><svg width="16" height="16"><path d="M0 8H16" stroke="#222" stroke-width="1.500"/></svg></button>
  <button class="winbtn" aria-label="Maximize"><svg width="16" height="16"><path d="M1 1H15V15H1Z" fill="none" stroke="#222" stroke-width="1.500"/></svg></button>
  <button class="winbtn" aria-label="Close"><svg width="16" height="16"><path d="M0 0L16 16M16 0L0 16" stroke="#222" stroke-width="1.500"/></svg></button>
</header>

<nav class="menubar d-flex align-items-center flex-shrink-0">
  <a href="#">File</a><a href="#">Edit</a><a href="#">View</a><a href="#">Camera</a><a href="#">Draw</a><a href="#">Tools</a><a href="#">Window</a><a href="#">Extensions</a><a href="#">Help</a>
</nav>

<section class="dock flex-shrink-0">
  <div class="toolstrip at-shadow d-flex align-items-center">
    <span class="grip"></span>
    <button class="tool me-2" aria-label="Show shadows"><svg width="40" height="40" viewBox="0 0 40 40"><path d="M1 11L20 1L31 18L13 31Z" fill="#fff" stroke="#222" stroke-width="1.600"/><path d="M1 11L13 31L17 39L9 36Z" fill="#555"/><path d="M13 31L31 18L33 22L39 28L22 39L14 38Z" fill="#222"/></svg></button>
    <div class="daysl">
      <input type="range" id="month" min="0" max="100" value="86" aria-label="Date">
      <div class="d-flex justify-content-between px-2"><span>J</span><span>F</span><span>M</span><span>A</span><span>M</span><span>J</span><span>J</span><span>A</span><span>S</span><span>O</span><span>N</span><span>D</span></div>
    </div>
    <div class="daysl">
      <input type="range" id="hour" min="0" max="100" value="69" aria-label="Time">
      <div class="d-flex justify-content-between"><span>06:43 AM</span><span>Noon</span><span>04:45 PM</span></div>
    </div>
  </div>

  <div class="toolstrip d-flex align-items-center pe-1">
    <span class="grip"></span>
    <button class="tool picked" aria-label="Select"><svg width="40" height="40"><use href="#i-select"/></svg></button>
    <span class="sep"></span>
    <button class="tool" aria-label="Eraser"><svg width="38" height="40"><use href="#i-eraser"/></svg></button>
    <button class="tool ms-1" aria-label="Line"><svg width="40" height="40"><use href="#i-pencil"/></svg></button><button class="drop" aria-label="Line tools"></button>
    <button class="tool ms-1" aria-label="Arc"><svg width="40" height="40"><use href="#i-arc2"/></svg></button><button class="drop" aria-label="Arc tools"></button>
    <button class="tool ms-1" aria-label="Rectangle"><svg width="40" height="40"><use href="#i-rect"/></svg></button><button class="drop" aria-label="Shape tools"></button>
    <span class="sep"></span>
    <button class="tool" aria-label="Push/Pull"><svg width="40" height="40"><use href="#i-push"/></svg></button>
    <button class="tool" aria-label="Offset"><svg width="40" height="40"><use href="#i-offset"/></svg></button>
    <button class="tool" aria-label="Move"><svg width="40" height="40"><use href="#i-move"/></svg></button>
    <button class="tool" aria-label="Rotate"><svg width="40" height="40"><use href="#i-rotate"/></svg></button>
    <button class="tool" aria-label="Scale"><svg width="40" height="40"><use href="#i-scale"/></svg></button>
    <span class="sep"></span>
    <button class="tool" aria-label="Tape Measure"><svg width="40" height="40"><use href="#i-tape"/></svg></button>
    <button class="tool" aria-label="Text"><svg width="40" height="40"><use href="#i-text"/></svg></button>
    <button class="tool" aria-label="Paint Bucket"><svg width="40" height="40"><use href="#i-paint"/></svg></button>
    <span class="sep"></span>
    <button class="tool" aria-label="Orbit"><svg width="40" height="40"><use href="#i-orbit"/></svg></button>
    <button class="tool" aria-label="Pan"><svg width="40" height="40"><use href="#i-hand"/></svg></button>
    <button class="tool" aria-label="Zoom"><svg width="38" height="40"><use href="#i-zoom"/></svg></button>
    <button class="tool" aria-label="Zoom Extents"><svg width="40" height="40"><use href="#i-extents"/></svg></button>
    <span class="sep"></span>
    <button class="tool" aria-label="3D Warehouse"><svg width="40" height="40"><use href="#i-wh"/></svg></button>
    <button class="tool" aria-label="Extension Warehouse"><svg width="40" height="40"><use href="#i-ext"/></svg></button>
    <button class="tool" aria-label="Send to LayOut"><svg width="40" height="40"><use href="#i-layout"/></svg></button>
    <span class="sep"></span>
    <button class="tool" aria-label="Extension Manager"><svg width="40" height="40"><use href="#i-ruby"/></svg></button>
    <span class="sep"></span>
    <button class="tool" aria-label="Account"><svg width="46" height="46"><use href="#i-user"/></svg></button><button class="drop" aria-label="Account menu"></button>
  </div>

  <div class="toolstrip at-views d-flex align-items-center">
    <span class="grip"></span>
    <button class="tool" aria-label="Iso"><svg width="40" height="40"><use href="#i-iso"/></svg></button>
    <button class="tool" aria-label="Top"><svg width="38" height="38"><use href="#i-top"/></svg></button>
    <button class="tool" aria-label="Front"><svg width="38" height="38"><use href="#i-front"/></svg></button>
    <button class="tool" aria-label="Right"><svg width="38" height="38"><use href="#i-right"/></svg></button>
    <button class="tool" aria-label="Back"><svg width="38" height="38"><use href="#i-back"/></svg></button>
    <button class="tool" aria-label="Left"><svg width="38" height="38"><use href="#i-left"/></svg></button>
  </div>

  <div class="toolstrip at-camera d-flex align-items-center">
    <span class="grip"></span>
    <button class="tool" aria-label="Orbit"><svg width="40" height="40"><use href="#i-orbit"/></svg></button>
    <button class="tool" aria-label="Pan"><svg width="40" height="40"><use href="#i-hand"/></svg></button>
    <button class="tool" aria-label="Zoom"><svg width="38" height="40"><use href="#i-zoom"/></svg></button>
    <button class="tool" aria-label="Zoom Window"><svg width="40" height="40"><use href="#i-zoomwin"/></svg></button>
    <button class="tool" aria-label="Zoom Extents"><svg width="40" height="40"><use href="#i-extents"/></svg></button>
    <button class="tool" aria-label="Previous"><svg width="38" height="38"><use href="#i-prev"/></svg></button>
    <button class="tool" aria-label="Position Camera"><svg width="40" height="40"><use href="#i-person"/></svg></button>
    <button class="tool" aria-label="Look Around"><svg width="40" height="40"><use href="#i-eye"/></svg></button>
    <button class="tool" aria-label="Walk"><svg width="34" height="36"><use href="#i-walk"/></svg></button>
  </div>
</section>

<main class="d-flex flex-grow-1 overflow-visible" style="min-height:0">
  <aside class="sidebar">
    <div class="grip-h"></div>
    <div class="toolgrid">
      <div class="d-flex"><button class="tool picked" aria-label="Select"><svg width="38" height="38"><use href="#i-select"/></svg></button><button class="tool" aria-label="Make Component"><svg width="38" height="38"><use href="#i-component"/></svg></button></div>
      <div class="d-flex"><button class="tool" aria-label="Paint Bucket"><svg width="40" height="38"><use href="#i-paint"/></svg></button><button class="tool" aria-label="Eraser"><svg width="38" height="40"><use href="#i-eraser"/></svg></button></div>
    </div>
    <div class="rule-h"></div>
    <div class="toolgrid">
      <div class="d-flex"><button class="tool" aria-label="Line"><svg width="38" height="38"><use href="#i-pencil"/></svg></button><button class="tool" aria-label="Freehand"><svg width="42" height="42"><use href="#i-freehand"/></svg></button></div>
      <div class="d-flex"><button class="tool" aria-label="Rectangle"><svg width="38" height="40"><use href="#i-rect"/></svg></button><button class="tool" aria-label="Rotated Rectangle"><svg width="38" height="40"><use href="#i-rrect"/></svg></button></div>
      <div class="d-flex"><button class="tool" aria-label="Circle"><svg width="40" height="40"><use href="#i-circle"/></svg></button><button class="tool" aria-label="Polygon"><svg width="40" height="40"><use href="#i-polygon"/></svg></button></div>
      <div class="d-flex"><button class="tool" aria-label="Arc"><svg width="40" height="40"><use href="#i-arc"/></svg></button><button class="tool" aria-label="2 Point Arc"><svg width="38" height="38"><use href="#i-arc2"/></svg></button></div>
      <div class="d-flex"><button class="tool" aria-label="3 Point Arc"><svg width="38" height="38"><use href="#i-arc3"/></svg></button><button class="tool" aria-label="Pie"><svg width="40" height="40"><use href="#i-pie"/></svg></button></div>
    </div>
    <div class="rule-h"></div>
    <div class="toolgrid">
      <div class="d-flex"><button class="tool" aria-label="Move"><svg width="40" height="40"><use href="#i-move"/></svg></button><button class="tool" aria-label="Push/Pull"><svg width="40" height="40"><use href="#i-push"/></svg></button></div>
      <div class="d-flex"><button class="tool" aria-label="Rotate"><svg width="40" height="40"><use href="#i-rotate"/></svg></button><button class="tool" aria-label="Follow Me"><svg width="40" height="40"><use href="#i-follow"/></svg></button></div>
      <div class="d-flex"><button class="tool" aria-label="Scale"><svg width="40" height="40"><use href="#i-scale"/></svg></button><button class="tool" aria-label="Offset"><svg width="40" height="40"><use href="#i-offset"/></svg></button></div>
    </div>
    <div class="rule-h"></div>
    <div class="toolgrid">
      <div class="d-flex"><button class="tool" aria-label="Tape Measure"><svg width="40" height="40"><use href="#i-tape"/></svg></button><button class="tool" aria-label="Dimensions"><svg width="40" height="40"><use href="#i-dim"/></svg></button></div>
      <div class="d-flex"><button class="tool" aria-label="Protractor"><svg width="40" height="40"><use href="#i-protractor"/></svg></button><button class="tool" aria-label="Text"><svg width="40" height="40"><use href="#i-text"/></svg></button></div>
      <div class="d-flex"><button class="tool" aria-label="Axes"><svg width="38" height="38"><use href="#i-axes"/></svg></button><button class="tool" aria-label="3D Text"><svg width="40" height="40"><use href="#i-text3d"/></svg></button></div>
    </div>
    <div class="rule-h"></div>
    <div class="toolgrid">
      <div class="d-flex"><button class="tool" aria-label="Orbit"><svg width="40" height="40"><use href="#i-orbit"/></svg></button><button class="tool" aria-label="Pan"><svg width="38" height="38"><use href="#i-hand"/></svg></button></div>
      <div class="d-flex"><button class="tool" aria-label="Zoom"><svg width="38" height="38"><use href="#i-zoom"/></svg></button><button class="tool" aria-label="Zoom Window"><svg width="38" height="38"><use href="#i-zoomwin"/></svg></button></div>
      <div class="d-flex"><button class="tool" aria-label="Zoom Extents"><svg width="40" height="40"><use href="#i-extents"/></svg></button><button class="tool" aria-label="Previous"><svg width="38" height="38"><use href="#i-prev"/></svg></button></div>
    </div>
    <div class="rule-h"></div>
    <div class="toolgrid">
      <div class="d-flex"><button class="tool" aria-label="Position Camera"><svg width="40" height="40"><use href="#i-person"/></svg></button><button class="tool" aria-label="Look Around"><svg width="38" height="38"><use href="#i-eye"/></svg></button></div>
    </div>
  </aside>

  <section class="d-flex flex-column flex-grow-1" style="min-width:0">
    <div class="scenes d-flex align-items-end">
      <button class="scene">Scene 1</button><button class="scene">Scene 2</button><button class="scene">Scene 4</button><button class="scene on">Scene 5</button><button class="scene">Scene 3</button>
    </div>
    <div class="canvas3d flex-grow-1 overflow-hidden">
      <svg width="100%" height="100%" viewBox="121 369 1978 969" preserveAspectRatio="xMidYMid meet" fill="none" stroke="#111" stroke-width="1.300" role="img" aria-label="Wireframe model">
        <path d="M1235 496L1200 517L1276 559L1311 539ZM1235 586L1200 607L1276 650L1311 629ZM1235 496V586M1200 517V607M1276 559V650M1311 539V629"/>
        <path d="M1204 695L1173 714L1226 743L1257 725ZM1204 755L1173 774L1226 803L1257 784ZM1204 695V755M1173 714V774M1226 743V803M1257 725V784"/>
        <path d="M732 1016L1021 845Q1028 841 1039 841Q1055 841 1066 847L1202 925M1210 931H1239L1245 933L1505 1082Q1522 1092 1522 1103Q1522 1112 1511 1118L1302 1241L1224 1288Q1221 1293 1215 1296Q1196 1306 1172 1306Q1150 1306 1133 1298L1030 1242Q1018 1234 1017 1220L1016 1202L735 1040Q726 1034 726 1028Q726 1020 732 1016"/>
        <path d="M1064.500 847.500L1202 926" stroke-width="2"/>
        <g transform="translate(920 740) scale(.3954 .37)" stroke-width="3.400">
          <path d="M366 48L123 202L1159 824L1401 672L989 424L900 478L708 362L796 307ZM366 130L123 285L1159 907L1401 753L989 505L900 560L708 444L796 388ZM366 290L123 446L1159 1070L1401 915L989 667L900 722L708 607L796 550Z"/>
          <path d="M366 48V290M123 202V446M796 307V550M713 340V500M708 362V607M900 478V722M989 424V667M1401 672V915M1159 824V1070"/>
          <path d="M713 340L470 492V655L713 503M682 540V784M682 620L440 774L638 895L720 846L853 925V1087L720 1008M682 702L440 857L638 976L915 1143M682 784L440 938L915 1224M440 774V938M638 895V1057M720 846V1008"/>
          <path d="M682 702L1017 905L853 1007L720 927L397 1131L671 1297L915 1143M1017 740V986L773 1138V977L1017 824M773 977L915 1060V1224M1159 907L915 1060M720 1008L397 1214L671 1379L1159 1070M397 1131V1214M671 1297V1379"/>
        </g>
      </svg>
    </div>
  </section>

  <aside class="trayside position-relative d-flex flex-column">
    <div class="d-flex flex-column overflow-hidden flex-grow-1">
      <div class="tray-title d-flex align-items-center flex-shrink-0"><span class="flex-grow-1">Default Tray</span>
        <button class="me-2 pe-1" aria-label="Auto hide"><svg width="12" height="14" viewBox="0 0 12 14"><path d="M3 1H9V9M3 1V9M8 1V9M0 9H12M6 9V14" stroke="#111" stroke-width="1.600" fill="none"/></svg></button>
        <button class="tray-x" aria-label="Close"><svg width="8" height="8"><path d="M1 1L7 7M7 1L1 7" stroke="#fff" stroke-width="2"/></svg></button></div>
      <div class="d-flex flex-grow-1 overflow-hidden">
        <div class="flex-grow-1">
          <div class="minitabs d-flex align-items-end mt-2"><button class="minitab on w67">Select</button><button class="minitab w60">Edit</button><button class="minitab w81">Statistics</button></div>
          <div class="toolrow d-flex align-items-center">
            <button class="flatbtn px-2" aria-label="View options"><svg width="26" height="20" viewBox="0 0 26 20"><path d="M1 1H6V6H1ZM1 12H6V17H1Z" fill="none" stroke="#111" stroke-width="2"/><path d="M9 1h8M9 4h7M9 7h6M9 12h8M9 15h7M9 18h6" stroke="#111" stroke-width="1.300"/><path d="M19 9h6l-3 3z"/></svg></button>
            <button class="flatbtn ms-2 px-1" aria-label="In Model"><svg width="26" height="26" viewBox="0 0 26 26"><path d="M4 14V24H22V14L13 4Z" fill="#fff"/><path d="M1 14L13 2L25 14M4 12V24H22V12M6 7V2H8V6" fill="none" stroke="#111" stroke-width="2"/><path d="M10 15H16V24H10Z"/></svg></button>
            <button class="flatbtn px-1 pb-1" aria-label="Navigation"><span class="tri"></span></button>
            <div class="search d-flex ms-1"><input type="text" placeholder="3D Warehouse" aria-label="Search 3D Warehouse"><button class="px-1" aria-label="Search"><svg width="18" height="20" viewBox="0 0 18 20"><circle cx="11" cy="7" r="5" fill="none" stroke="#222" stroke-width="2"/><path d="M7 11L1 18" stroke="#222" stroke-width="2"/></svg></button></div>
            <button class="flatbtn flex-grow-1 border-end-0" aria-label="Details"><svg width="20" height="20" viewBox="0 0 20 20"><path d="M8 0L20 10L8 20Z"/><path d="M1 4H10V16H1Z" fill="#fff" stroke="#125" stroke-width="1.500"/><path d="M1 4H10V8H1Z" fill="#4a90e0"/></svg></button>
          </div>
          <div class="comps d-flex ms-1 ps-1">
            <svg class="mt-2 pt-1" width="108" height="118" viewBox="0 0 108 112"><path d="M6 0H107V101H102M3 3H104V104H101" fill="none" stroke="#999"/><path d="M1 6H101V106H1Z" fill="#fff" stroke="#888" stroke-width="1.500"/><path d="M17 58L30 56L31 86Z" fill="#999"/><path d="M21 33L38 29L42 35L72 28L35 40L31 84Z" fill="#71b3dc" stroke="#567" stroke-width="1.500"/><path d="M30 39L80 27L76 66L32 85Z" fill="#b7956a" stroke="#555f66" stroke-width="2"/></svg>
            <span class="compname flex-grow-1">Dynamic Components Training</span>
            <div class="sb d-flex flex-column align-items-center pt-2 pb-2"><svg width="14" height="10"><use href="#i-up"/></svg><i class="mt-auto mb-2 w-100"></i><svg width="14" height="10"><use href="#i-down"/></svg></div>
          </div>
          <div class="compnav d-flex align-items-center justify-content-between bg-white ms-1 px-2">
            <svg width="18" height="18" viewBox="0 0 18 18"><path d="M1 9L9 1V6H16V12H9V17Z" fill="none" stroke="#888" stroke-width="1.500"/></svg><span class="text-secondary">Components</span><svg width="18" height="18" viewBox="0 0 18 18"><path d="M17 9L9 1V6H2V12H9V17Z" fill="none" stroke="#888" stroke-width="1.500"/></svg></div>
          <div class="stylehead d-flex align-items-center"><span class="tri ms-2 me-2"></span><span class="ps-1 flex-grow-1">Styles</span><button class="xbtn me-1" aria-label="Close Styles"><svg width="8" height="8"><path d="M0 0L8 8M8 0L0 8" stroke="#222" stroke-width="1.600"/></svg></button></div>
          <div class="styleinfo position-relative d-flex">
            <svg class="ms-1" width="100" height="114" viewBox="0 0 100 114"><path d="M1 1H99V113H1Z" fill="#fff" stroke="#999"/><path d="M8 41L36 18L68 15V28M36 18V78L52 92L86 97M8 41L36 44L50 34L68 15M50 44H92M50 44V92M36 70L10 84L36 96L52 90L70 85L92 88" fill="none" stroke="#333" stroke-width="1.500"/><path d="M26 50Q34 28 50 31Q63 33 71 42M74 64Q66 80 52 83Q38 83 30 70" fill="none" stroke="#777" stroke-width="8"/><path d="M76 32L79 50L60 48ZM22 64L40 68L27 82Z" fill="#777"/><circle cx="84" cy="93" r="8.500" fill="#fff" stroke="#3a9a3a" stroke-width="2"/><path d="M81 89L88 93L81 97Z" fill="#3a9a3a"/></svg>
            <div><input class="fld namefld" type="text" value="Wireframe" aria-label="Style name"><textarea class="fld descfld mt-1" aria-label="Style description">Wireframe facestyle.  White background.</textarea></div>
            <div class="flex-grow-1 d-flex flex-column align-items-center justify-content-between py-1">
              <button aria-label="Display secondary pane"><svg width="16" height="22"><path d="M0 0H16V22H0Z" fill="#ddd"/><path d="M0 0H16V12H0Z"/><path d="M4 5H12V8H4Z" fill="#fff"/><path d="M3 20H13L8 14Z"/></svg></button>
              <button aria-label="Create new style"><svg width="28" height="28"><path d="M9 12L14 2L20 4L14 14Z" fill="#a5a27f" stroke="#444"/><path d="M18 8H26V17H18Z" fill="#2a36c8" stroke="#114"/><circle cx="8" cy="19" r="7" fill="#fff" stroke="#111" stroke-width="2"/><path d="M8 15V23M4 19H12" stroke="#111" stroke-width="2"/></svg></button>
              <button class="mb-2" aria-label="Update style"><svg width="22" height="22" viewBox="0 0 22 22"><path d="M2 8Q9-1 17 6M20 14Q13 23 5 16" fill="none" stroke="#111" stroke-width="3"/><path d="M21 1V10H13ZM1 21V12H9Z"/></svg></button>
            </div>
            <div class="redbox"></div>
          </div>
          <div class="line"></div>
          <div class="minitabs d-flex align-items-end styletabs"><button class="minitab w60">Select</button><button class="minitab on w67">Edit</button><button class="minitab w60">Mix</button></div>
          <div class="modelrow d-flex align-items-center ms-1">
            <button class="mi" aria-label="Edge settings"><svg width="26" height="26" fill="none"><use href="#i-cube"/><path d="M2 17L18 15L24 21M7 3V16M18 8H2" stroke="#222"/></svg></button>
            <button class="mi" aria-label="Face settings"><svg width="26" height="26" fill="#dcb986"><use href="#i-cube"/></svg></button>
            <button class="mi" aria-label="Background settings"><svg width="36" height="36" viewBox="0 0 36 36"><path d="M0 17H36V36H0Z" fill="#dcbd90"/><path d="M8 9L22 6L29 9V22L22 27L8 23Z" fill="#ddd" stroke="#777"/><path d="M22 6V27" stroke="#999"/></svg></button>
            <button class="mi" aria-label="Watermark settings"><svg width="26" height="26" fill="#dcb986"><use href="#i-cube"/><circle cx="19" cy="19" r="6" fill="#eee"/><path d="M16 17v5M20 16v6M23 17l-3 2 3 3" stroke="#222" fill="none" stroke-width="1.500"/></svg></button>
            <button class="mi mi-on" aria-label="Modeling settings"><svg width="26" height="26"><path d="M2 4L16 2V24L2 21Z" fill="#b9bdf8"/><path d="M2 8H16M2 13H16M2 18H16M6 3V22M11 3V23" stroke="#f4f4ff"/><path d="M16 1L23 6V20L16 24Z" fill="#7d86ee" stroke="#333"/></svg></button>
            <b class="ms-auto me-1">Modeling</b>
          </div>
          <div class="line ms-1"></div>
          <div class="colors d-flex">
            <div>
              <div class="colorrow d-flex align-items-center gap-2"><span class="lab1">Selected</span><button class="swatch" style="background:#00f" aria-label="Selected color"></button></div>
              <div class="colorrow d-flex align-items-center gap-2"><span class="lab1">Locked</span><button class="swatch" style="background:#f00" aria-label="Locked color"></button></div>
              <div class="colorrow d-flex align-items-center gap-2"><span class="lab1">Guides</span><button class="swatch" style="background:#000" aria-label="Guides color"></button></div>
            </div>
            <div>
              <div class="colorrow d-flex align-items-center gap-2"><span class="lab2">Inactive Section</span><button class="swatch" style="background:#716a61" aria-label="Inactive Section color"></button></div>
              <div class="colorrow d-flex align-items-center gap-2"><span class="lab2">Active Section</span><button class="swatch" style="background:#ff8c00" aria-label="Active Section color"></button></div>
              <div class="colorrow d-flex align-items-center gap-2"><span class="lab2">Section Fill</span><button class="swatch" style="background:#000" aria-label="Section Fill color"></button></div>
              <div class="colorrow d-flex align-items-center gap-2"><span class="lab2">Section Lines</span><button class="swatch" style="background:#000" aria-label="Section Lines color"></button></div>
            </div>
          </div>
          <div class="lw d-flex align-items-center gap-2 justify-content-end"><label for="slw">Section Line Width</label><input id="slw" class="fld lwfld" type="text" value="3"></div>
          <div class="line inset"></div>
          <div class="d-flex inset pt-2">
            <div class="chkcol">
              <div class="chkline d-flex align-items-center"><input class="chk" type="checkbox" id="c1"><label class="dotted" for="c1">Hidden Geometry</label></div>
              <div class="chkline d-flex align-items-center"><input class="chk" type="checkbox" id="c2"><label for="c2">Hidden Objects</label></div>
              <div class="chkline d-flex align-items-center"><input class="chk" type="checkbox" id="c3"><label for="c3">Color by Tag</label></div>
              <div class="chkline d-flex align-items-center"><input class="chk" type="checkbox" id="c4"><label for="c4">Guides</label></div>
            </div>
            <div>
              <div class="chkline d-flex align-items-center"><input class="chk" type="checkbox" id="c5"><label for="c5">Model Axes</label></div>
              <div class="chkline d-flex align-items-center"><input class="chk" type="checkbox" id="c6"><label for="c6">Section Planes</label></div>
              <div class="chkline d-flex align-items-center"><input class="chk" type="checkbox" id="c7" checked><label for="c7">Section Cuts</label></div>
              <div class="chkline d-flex align-items-center"><input class="chk" type="checkbox" id="c8"><label for="c8">Section Fill</label></div>
            </div>
          </div>
          <div class="line inset mt-1"></div>
          <b class="inset d-block pt-2">Match Photo</b>
        </div>
        <div class="sb outer d-flex flex-column align-items-center"><svg width="14" height="10"><use href="#i-up"/></svg><i class="w-100"></i><svg class="mt-auto" width="14" height="10"><use href="#i-down"/></svg></div>
      </div>
    </div>
    <div class="ring ring-a"></div>
    <div class="ring ring-b"></div>
  </aside>
</main>

<footer class="statusbar d-flex align-items-start">
  <svg class="ms-2" width="24" height="24" viewBox="0 0 24 24"><circle cx="12" cy="12" r="11" fill="none" stroke="#aaa" stroke-width="1.500"/><circle cx="12" cy="9" r="5" fill="#aaa"/><path d="M8 11h8l-4 9z" fill="#aaa"/></svg>
  <svg class="ms-4" width="24" height="24" viewBox="0 0 24 24"><circle cx="12" cy="12" r="11" fill="none" stroke="#111" stroke-width="2"/><circle cx="12" cy="6" r="2.200"/><path d="M9 10H15V14H14V20H10V14H9Z"/></svg>
  <span class="vr mx-3"></span>
  <span class="flex-grow-1">Select objects. Shift to extend select. Drag mouse to select multiple.</span>
  <label for="meas">Measurements</label><input id="meas" class="meas" type="text">
</footer>
</body>
</html>
